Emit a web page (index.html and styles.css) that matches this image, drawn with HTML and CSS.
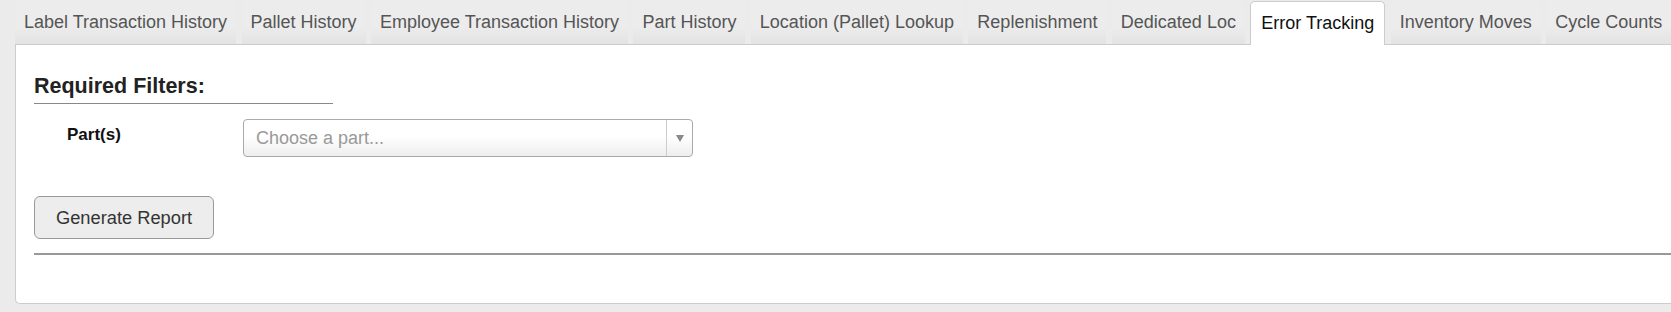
FILE: index.html
```html
<!DOCTYPE html>
<html lang="en">
<head>
    <meta charset="UTF-8">
    <title>Reports</title>
    <link rel="stylesheet" href="styles.css">
</head>
<body>
    <ul class="tabs">
        <li class="tab">Label Transaction History</li>
        <li class="tab">Pallet History</li>
        <li class="tab">Employee Transaction History</li>
        <li class="tab">Part History</li>
        <li class="tab">Location (Pallet) Lookup</li>
        <li class="tab">Replenishment</li>
        <li class="tab">Dedicated Loc</li>
        <li class="tab active">Error Tracking</li>
        <li class="tab">Inventory Moves</li>
        <li class="tab">Cycle Counts</li>
    </ul>

    <div class="panel">
        <h3 class="filters-title">Required Filters:</h3>

        <div class="filter-row">
            <label class="filter-label">Part(s)</label>
            <div class="chosen">
                <span class="chosen-text">Choose a part...</span>
                <span class="chosen-arrow"><b></b></span>
            </div>
        </div>

        <button class="btn">Generate Report</button>
        <hr class="divider">
    </div>
</body>
</html>
```

FILE: styles.css
```css
body {
    margin: 0;
    background: #ebebeb;
    font-family: "Liberation Sans", Arial, sans-serif;
    overflow: hidden;
}
.tabs {
    list-style: none;
    margin: 0;
    padding: 0 0 0 15px;
    display: flex;
    align-items: flex-end;
    height: 44px;
    white-space: nowrap;
    position: relative;
    z-index: 1;
}
.tab {
    height: 43px;
    line-height: 43px;
    padding: 0 9px;
    margin-right: 5.4px;
    font-size: 18px;
    color: #555;
    background: linear-gradient(#ececec 0%, #ececec 60%, #e3e3e3 100%);
    box-sizing: border-box;
}
.tab.active {
    height: 44px;
    line-height: 42px;
    background: #fff;
    color: #111;
    border: 1px solid #ccc;
    border-bottom: none;
    border-radius: 5px 5px 0 0;
    padding: 0 10px;
    margin-bottom: -1px;
}
.panel {
    margin-left: 15px;
    height: 260px;
    background: #fff;
    border: 1px solid #ccc;
    border-right: none;
    border-radius: 0 0 0 5px;
    padding: 0 0 0 18px;
    box-sizing: border-box;
}
.filters-title {
    width: 299px;
    margin: 29px 0 0;
    padding-bottom: 4px;
    font-size: 21.5px;
    font-weight: bold;
    color: #222;
    border-bottom: 1px solid #888;
    line-height: 25px;
}
.filter-row {
    display: grid;
    grid-template-columns: 209px 450px;
    margin-top: 15px;
}
.filter-label {
    padding: 6px 0 0 33px;
    font-size: 17px;
    font-weight: bold;
    color: #111;
}
.chosen {
    height: 38px;
    border: 1px solid #aaa;
    border-radius: 4px;
    background: linear-gradient(#fff 45%, #eee 100%);
    display: flex;
    align-items: center;
    box-sizing: border-box;
}
.chosen-text {
    flex: 1;
    padding-left: 12px;
    font-size: 18px;
    color: #999;
}
.chosen-arrow {
    width: 25px;
    height: 100%;
    border-left: 1px solid #ccc;
    display: flex;
    align-items: center;
    justify-content: center;
}
.chosen-arrow b {
    width: 0;
    height: 0;
    border-left: 4px solid transparent;
    border-right: 4px solid transparent;
    border-top: 7px solid #888;
}
.btn {
    display: block;
    margin-top: 39px;
    width: 180px;
    height: 43px;
    font-family: inherit;
    font-size: 18.3px;
    color: #333;
    background: #ededed;
    border: 1px solid #999;
    border-radius: 6px;
}
.divider {
    margin: 14px 0 0;
    border: none;
    border-top: 2px solid #999;
    height: 0;
}
```
